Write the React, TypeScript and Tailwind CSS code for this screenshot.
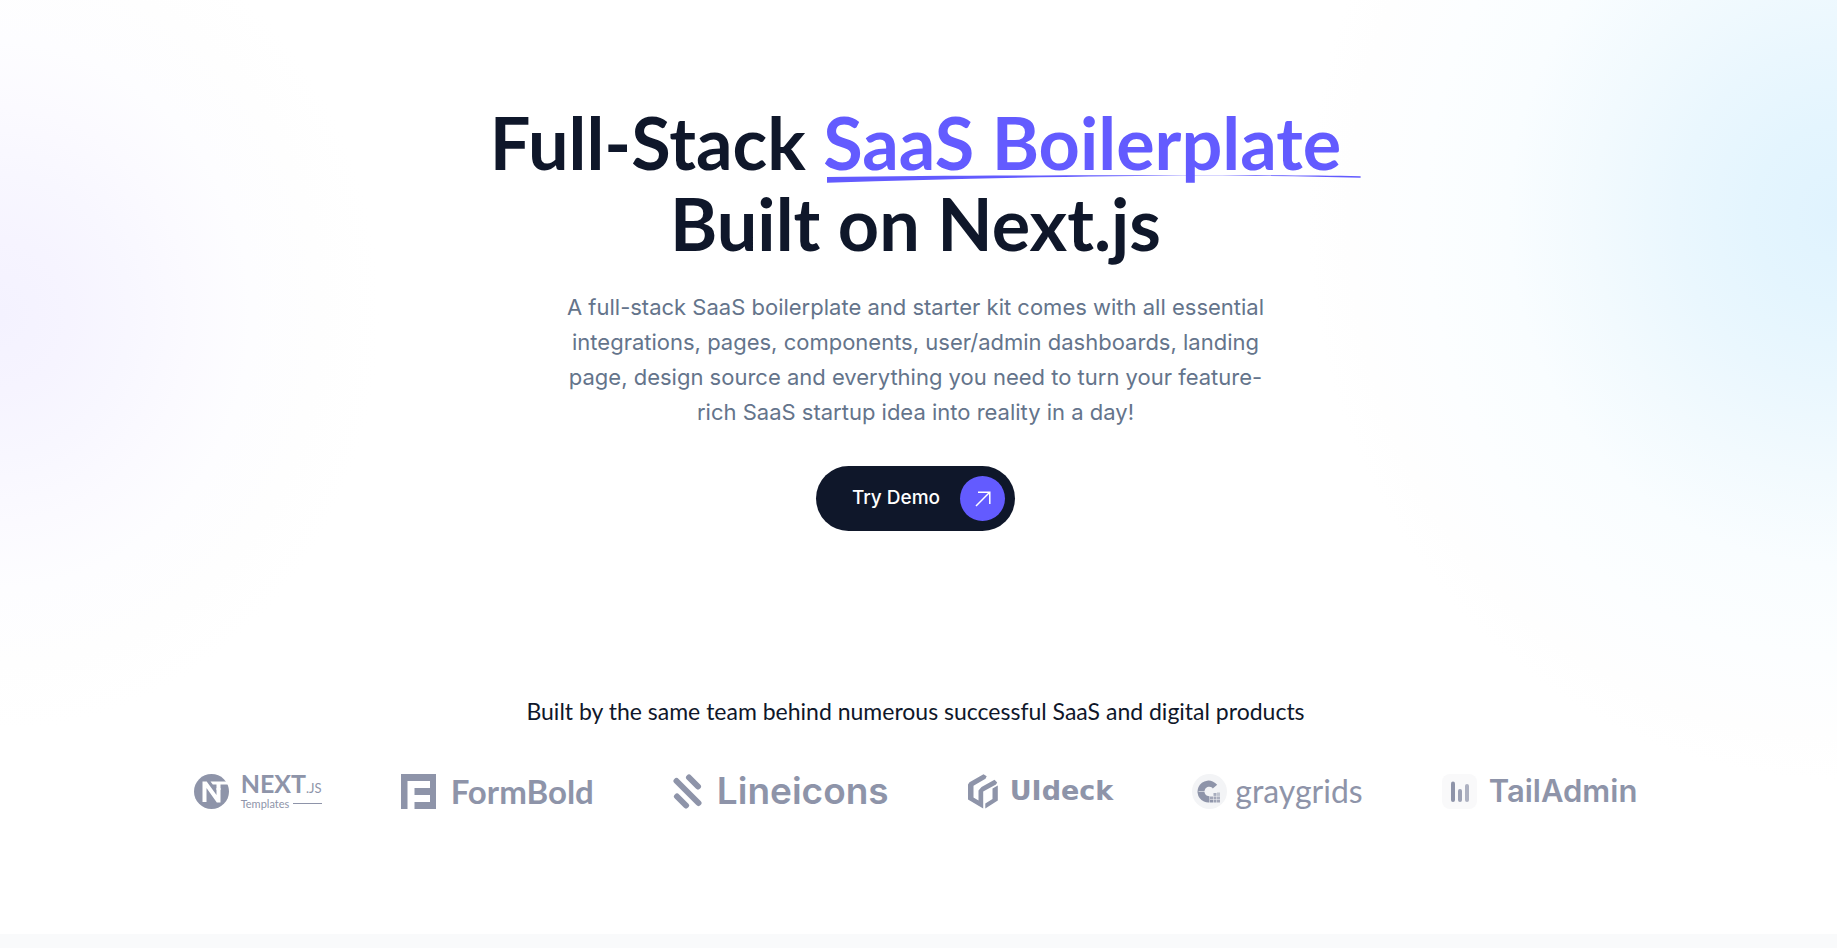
import React from "react";

function NextTemplatesLogo() {
  return (
    <a href="#nextjs-templates" className="flex h-9 items-center gap-3" aria-label="Next.js Templates">
      <svg viewBox="0 0 35 35" className="size-[35px] shrink-0" aria-hidden="true">
        <circle cx="17.500" cy="17.500" r="17.500" fill="#8e94a9" />
        <path d="M8.500 7.500h4.200L22.500 21V14h4v14.500h-3.700L12.500 14V28h-4z" fill="#fff" />
        <path d="M16.500 7.500H35v3h-8.500V16h-4v-5.500h-3.700z" fill="#fff" />
      </svg>
      <span className="flex flex-col text-[#8e94a9]">
        <span className="flex items-baseline leading-5">
          <span className="font-['Lato',sans-serif] text-[25px] font-bold">NEXT</span>
          <span className="font-['Lato',sans-serif] text-[13px]">.JS</span>
        </span>
        <span className="flex items-center gap-1 font-['Lato',sans-serif] text-[11px] leading-3">
          Templates
          <span className="h-px grow bg-[#8e94a9]" />
        </span>
      </span>
    </a>
  );
}

function FormBoldLogo() {
  return (
    <a href="#formbold" className="flex h-9 items-center gap-[15px]">
      <svg viewBox="0 0 35 35" className="size-[35px] shrink-0" aria-hidden="true">
        <path d="M0 0h35v35H13.500v-7H29v-7H13.500v-7H29V7H6.500v28H0z" fill="#8e94a9" />
      </svg>
      <span className="font-['Lato',sans-serif] text-[33px] leading-9 font-bold text-[#8e94a9]">FormBold</span>
    </a>
  );
}

function LineiconsLogo() {
  return (
    <a href="#lineicons" className="flex h-9 items-center gap-[15px]">
      <svg viewBox="0 0 29 35" className="h-[35px] w-[29px] shrink-0" aria-hidden="true">
        <g stroke="#8e94a9" strokeWidth="6" strokeLinecap="round">
          <path d="M3.500 7 25.500 29" />
          <path d="M16 3.500 25 12.500" />
          <path d="M4 22.500 13 31.500" />
        </g>
      </svg>
      <span className="font-['Inter',sans-serif] text-[37px] leading-9 font-semibold text-[#8e94a9]">Lineicons</span>
    </a>
  );
}

function UideckLogo() {
  return (
    <a href="#uideck" className="flex h-9 items-center gap-3">
      <svg viewBox="0 0 30 35" className="h-[35px] w-[30px] shrink-0" aria-hidden="true">
        <path
          d="M15.500 .3 18.700 2.300 17.500 4.800 5.500 11.800V23.500L10.500 26.400V16.500L13.500 13 26.500 5.800 29.200 8.500 28 10.500 15.200 17.600V34.500L0 25.500V10.500L1.500 8.300z"
          fill="#8e94a9"
        />
        <path d="M24.500 14.500 29.800 11.500V26.500L17.300 34.500V29.500L24.500 25z" fill="#8e94a9" />
      </svg>
      <span className="font-['DejaVu_Sans',sans-serif] text-[27px] leading-9 font-bold text-[#8e94a9]">UIdeck</span>
    </a>
  );
}

function GraygridsLogo() {
  return (
    <a href="#graygrids" className="flex h-9 items-center gap-2">
      <svg viewBox="0 0 35 35" className="size-[35px] shrink-0" aria-hidden="true">
        <circle cx="17.500" cy="17.500" r="17.500" fill="#f3f4f6" />
        <path
          d="M25.200 10.800A11 11 0 1 0 17.500 28.500V22.200A4.700 4.700 0 1 1 20.800 14.500z"
          fill="#8e94a9"
        />
        <path d="M6.500 17.500h7" stroke="#f3f4f6" strokeWidth=".6" />
        <g fill="#8e94a9">
          <rect x="18" y="22.500" width="3" height="2.700" opacity=".8" />
          <rect x="21.500" y="19" width="3" height="2.900" opacity=".75" />
          <rect x="25" y="18.500" width="3" height="3.400" opacity=".5" />
          <rect x="21.500" y="22.500" width="3" height="2.700" opacity=".8" />
          <rect x="25" y="22.500" width="3" height="2.700" opacity=".7" />
          <rect x="18" y="25.700" width="3" height="2.800" />
          <rect x="21.500" y="25.700" width="3" height="2.800" opacity=".85" />
          <rect x="25" y="25.700" width="3" height="2.800" opacity=".8" />
        </g>
      </svg>
      <span className="font-['Lato',sans-serif] text-[32px] leading-8 text-[#8e94a9]">graygrids</span>
    </a>
  );
}

function TailAdminLogo() {
  return (
    <a href="#tailadmin" className="flex h-9 items-center gap-3">
      <svg viewBox="0 0 35 35" className="size-[35px] shrink-0" aria-hidden="true">
        <rect width="35" height="35" rx="8" fill="#f9f9fa" />
        <g strokeWidth="4" strokeLinecap="round" stroke="#8e94a9">
          <path d="M11 9.500V26" />
          <path d="M18 17V26" opacity=".85" />
          <path d="M25 12V26" opacity=".7" />
        </g>
      </svg>
      <span className="font-['Inter',sans-serif] text-[31px] leading-9 font-semibold text-[#8e94a9]">TailAdmin</span>
    </a>
  );
}

export default function App() {
  return (
    <div className="relative min-h-screen overflow-hidden bg-white pr-1.5 font-['Inter',sans-serif]">
      <div
        aria-hidden="true"
        className="absolute -left-[380px] -top-[100px] h-[830px] w-[760px] bg-[radial-gradient(closest-side,#f4f2ff_0%,#f6f4ff_18%,#f8f7ff_34%,#fbfaff_50%,#fdfdff_66%,#fefefe_84%,#ffffff_100%)]"
      />
      <div
        aria-hidden="true"
        className="absolute -right-[530px] -top-[350px] h-[1130px] w-[1060px] bg-[radial-gradient(closest-side,#e0f3fe_0%,#e4f5fe_16%,#eaf7fe_30%,#f2fafe_46%,#f9fdff_62%,#fcfeff_78%,#fefefe_92%,#ffffff_100%)]"
      />
      <main className="relative flex flex-col items-center pt-[102px]">
        <h1 className="text-center font-['Lato',sans-serif] text-[72px] leading-[81px] font-bold text-[#0f172a]">
          Full-Stack{" "}
          <span className="relative inline-block text-[#635bff]">
            SaaS Boilerplate
            <svg
              viewBox="0 0 530 8"
              preserveAspectRatio="none"
              className="absolute top-[73px] left-1 h-2 w-[103%]"
              aria-hidden="true"
            >
              <path
                d="M0 2C120 .2 260 .2 376 .2 440 .2 490 .7 530 1.200V2.800C480 1.700 430 .7 376 .5 260 1 130 3.500 0 7.800z"
                fill="#635bff"
              />
            </svg>
          </span>
          <br />
          Built on Next.js
        </h1>
        <p className="mt-[26px] max-w-[710px] text-center text-[22px] leading-[35px] text-[#64748b]">
          A full-stack SaaS boilerplate and starter kit comes with all essential integrations, pages, components,
          user/admin dashboards, landing page, design source and everything you need to turn your feature-rich SaaS
          startup idea into reality in a day!
        </p>
        <a
          href="#demo"
          className="mt-9 flex items-center gap-5 rounded-full bg-[#0f172a] py-2.5 pr-2.5 pl-9 text-[19px] font-medium text-white"
        >
          Try Demo
          <span className="flex size-[45px] items-center justify-center rounded-full bg-[#635bff]">
            <svg viewBox="0 0 16 16" className="size-4" fill="none" stroke="#fff" strokeWidth="1.500" aria-hidden="true">
              <path d="M1 15 14.700 1.300M3 1.200H14.800V13" />
            </svg>
          </span>
        </a>
        <section className="flex flex-col items-center pt-[162px] pb-[125px]">
          <h2 className="text-center font-['Lato',sans-serif] text-[23px] leading-9 font-normal text-[#0f172a]">
            Built by the same team behind numerous successful SaaS and digital products
          </h2>
          <div className="mt-11 flex items-center justify-center gap-[79px]">
            <NextTemplatesLogo />
            <FormBoldLogo />
            <LineiconsLogo />
            <UideckLogo />
            <GraygridsLogo />
            <TailAdminLogo />
          </div>
        </section>
      </main>
      <div className="relative -mr-1.5 h-[14px] bg-[#f9fafb]" />
    </div>
  );
}
